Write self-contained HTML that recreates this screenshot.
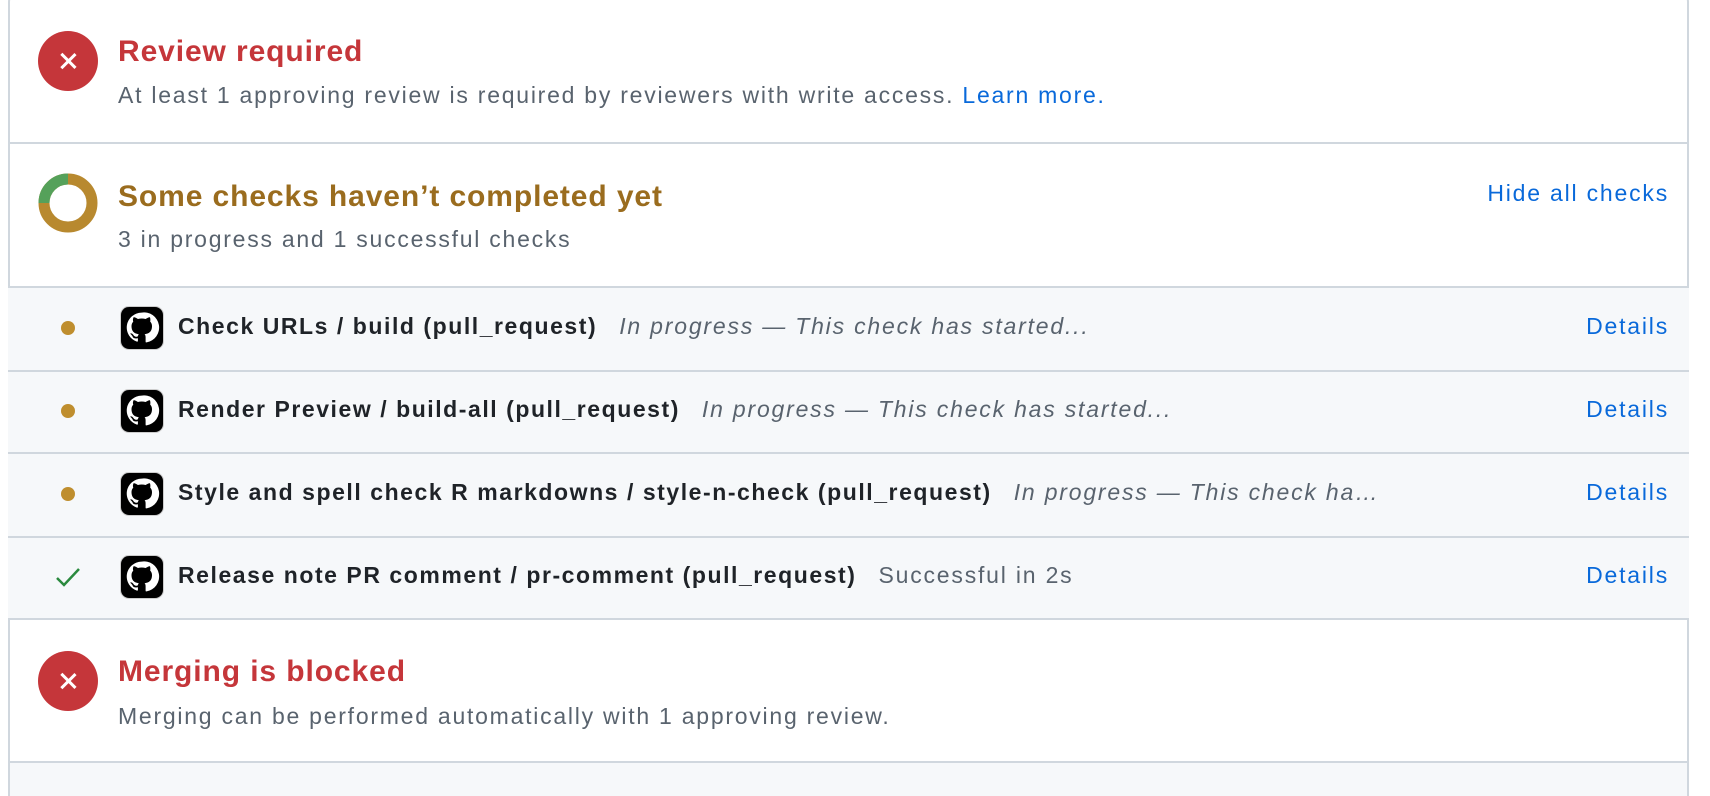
<!DOCTYPE html>
<html style="height:796px;overflow:hidden"><head><style>
*{margin:0;padding:0;box-sizing:border-box}
body{width:1710px;height:796px;background:#fff;font-family:"Liberation Sans",sans-serif;overflow:hidden;position:relative}
.frame{position:absolute;left:8px;top:-10px;width:1681px;height:806px;border:2px solid #d0d7de;border-bottom:none;border-radius:12px 12px 0 0;background:#fff}
.sec{position:absolute;left:8px;width:1681px;border-bottom:2px solid #d0d7de}
.ico{position:absolute;left:38px;width:60px;height:60px;border-radius:50%;background:#c5363a}
.ico:before,.ico:after{content:"";position:absolute;left:29px;top:20px;width:2.5px;height:20px;background:#fff;transform:rotate(45deg)}
.ico:after{transform:rotate(-45deg)}
.t{position:absolute;left:118px;font-size:30px;letter-spacing:0.9px;font-weight:bold;white-space:nowrap}
.s{position:absolute;left:118px;font-size:23px;letter-spacing:1.75px;color:#59636e;white-space:nowrap}
a{color:#0969da;text-decoration:none}
.row{position:absolute;left:8px;width:1681px;background:#f6f8fa;border-bottom:2px solid #d0d7de}
.dot{position:absolute;left:61px;width:14px;height:14px;border-radius:50%;background:#bf8e2e}
.gh{position:absolute;left:120px;width:44px;height:44px;border-radius:9px;background:#000;border:1.5px solid #ccc}
.n{position:absolute;left:178px;font-size:23px;letter-spacing:1.55px;font-weight:bold;color:#1f2328;white-space:nowrap}
.d{font-weight:normal;font-style:italic;color:#59636e;margin-left:22px;letter-spacing:1.8px}
.det{position:absolute;right:41px;font-size:23px;letter-spacing:1.8px;color:#0969da}
</style></head><body>
<div class="frame"></div>
<div class="sec" style="top:0;height:144px;border-top:none"></div>
<div class="ico" style="top:31px"></div>
<div class="t" style="top:35px;color:#c5363a">Review required</div>
<div class="s" style="top:82px">At least 1 approving review is required by reviewers with write access. <a>Learn more.</a></div>
<div class="sec" style="top:144px;height:144px"></div>
<svg style="position:absolute;left:38px;top:173px" width="60" height="60" viewBox="0 0 60 60"><circle cx="30" cy="30" r="24" fill="none" stroke="#b8892f" stroke-width="11"/><path d="M30 6 A24 24 0 0 0 6 30" fill="none" stroke="#55a15a" stroke-width="11"/></svg>
<div class="t" style="top:180px;color:#9a6c1e">Some checks haven’t completed yet</div>
<div class="s" style="top:226px">3 in progress and 1 successful checks</div>
<div class="det" style="top:180px">Hide all checks</div>

<div class="row" style="top:288px;height:84px"></div>
<div class="dot" style="top:321px"></div><div class="gh" style="top:306px"><svg width="41" height="41" viewBox="0 0 16 16"><path fill="#fff" d="M8 2.2a5.8 5.8 0 0 0-1.8 11.3c.3 0 .4-.1.4-.3v-1c-1.6.3-2-.4-2.1-.8l-.6-.7c-.2-.1-.5-.4 0-.4.5 0 .8.4.9.6.6 1 1.5.7 1.8.5.1-.4.2-.7.4-.8-1.4-.2-2.9-.7-2.9-3.2 0-.7.3-1.3.7-1.7-.1-.2-.3-.8.1-1.7 0 0 .5-.2 1.7.7a5.7 5.7 0 0 1 3 0c1.2-.8 1.7-.7 1.7-.7.3.9.1 1.5.1 1.7.4.4.7 1 .7 1.7 0 2.5-1.5 3-2.9 3.2.2.2.4.6.4 1.2v1.7c0 .2.1.4.4.3A5.8 5.8 0 0 0 8 2.2z"/></svg></div>
<div class="n" style="top:313px">Check URLs / build (pull_request)<span class="d">In progress — This check has started...</span></div>
<div class="det" style="top:313px">Details</div>

<div class="row" style="top:372px;height:82px"></div>
<div class="dot" style="top:404px"></div><div class="gh" style="top:389px"><svg width="41" height="41" viewBox="0 0 16 16"><path fill="#fff" d="M8 2.2a5.8 5.8 0 0 0-1.8 11.3c.3 0 .4-.1.4-.3v-1c-1.6.3-2-.4-2.1-.8l-.6-.7c-.2-.1-.5-.4 0-.4.5 0 .8.4.9.6.6 1 1.5.7 1.8.5.1-.4.2-.7.4-.8-1.4-.2-2.9-.7-2.9-3.2 0-.7.3-1.3.7-1.7-.1-.2-.3-.8.1-1.7 0 0 .5-.2 1.7.7a5.7 5.7 0 0 1 3 0c1.2-.8 1.7-.7 1.7-.7.3.9.1 1.5.1 1.7.4.4.7 1 .7 1.7 0 2.5-1.5 3-2.9 3.2.2.2.4.6.4 1.2v1.7c0 .2.1.4.4.3A5.8 5.8 0 0 0 8 2.2z"/></svg></div>
<div class="n" style="top:396px">Render Preview / build-all (pull_request)<span class="d">In progress — This check has started...</span></div>
<div class="det" style="top:396px">Details</div>

<div class="row" style="top:454px;height:84px"></div>
<div class="dot" style="top:487px"></div><div class="gh" style="top:472px"><svg width="41" height="41" viewBox="0 0 16 16"><path fill="#fff" d="M8 2.2a5.8 5.8 0 0 0-1.8 11.3c.3 0 .4-.1.4-.3v-1c-1.6.3-2-.4-2.1-.8l-.6-.7c-.2-.1-.5-.4 0-.4.5 0 .8.4.9.6.6 1 1.5.7 1.8.5.1-.4.2-.7.4-.8-1.4-.2-2.9-.7-2.9-3.2 0-.7.3-1.3.7-1.7-.1-.2-.3-.8.1-1.7 0 0 .5-.2 1.7.7a5.7 5.7 0 0 1 3 0c1.2-.8 1.7-.7 1.7-.7.3.9.1 1.5.1 1.7.4.4.7 1 .7 1.7 0 2.5-1.5 3-2.9 3.2.2.2.4.6.4 1.2v1.7c0 .2.1.4.4.3A5.8 5.8 0 0 0 8 2.2z"/></svg></div>
<div class="n" style="top:479px">Style and spell check R markdowns / style-n-check (pull_request)<span class="d">In progress — This check ha…</span></div>
<div class="det" style="top:479px">Details</div>

<div class="row" style="top:538px;height:82px"></div>
<svg style="position:absolute;left:55px;top:566px" width="26" height="22" viewBox="0 0 26 22"><path d="M2 12 L9 19 L24 3" fill="none" stroke="#2a8a3e" stroke-width="2.5"/></svg>
<div class="gh" style="top:555px"><svg width="41" height="41" viewBox="0 0 16 16"><path fill="#fff" d="M8 2.2a5.8 5.8 0 0 0-1.8 11.3c.3 0 .4-.1.4-.3v-1c-1.6.3-2-.4-2.1-.8l-.6-.7c-.2-.1-.5-.4 0-.4.5 0 .8.4.9.6.6 1 1.5.7 1.8.5.1-.4.2-.7.4-.8-1.4-.2-2.9-.7-2.9-3.2 0-.7.3-1.3.7-1.7-.1-.2-.3-.8.1-1.7 0 0 .5-.2 1.7.7a5.7 5.7 0 0 1 3 0c1.2-.8 1.7-.7 1.7-.7.3.9.1 1.5.1 1.7.4.4.7 1 .7 1.7 0 2.5-1.5 3-2.9 3.2.2.2.4.6.4 1.2v1.7c0 .2.1.4.4.3A5.8 5.8 0 0 0 8 2.2z"/></svg></div>
<div class="n" style="top:562px">Release note PR comment / pr-comment (pull_request)<span class="d" style="font-style:normal">Successful in 2s</span></div>
<div class="det" style="top:562px">Details</div>

<div class="sec" style="top:620px;height:143px"></div>
<div class="ico" style="top:651px"></div>
<div class="t" style="top:655px;color:#c5363a">Merging is blocked</div>
<div class="s" style="top:703px">Merging can be performed automatically with 1 approving review.</div>
<div style="position:absolute;left:10px;top:763px;width:1677px;height:33px;background:#f6f8fa"></div>
</body></html>
